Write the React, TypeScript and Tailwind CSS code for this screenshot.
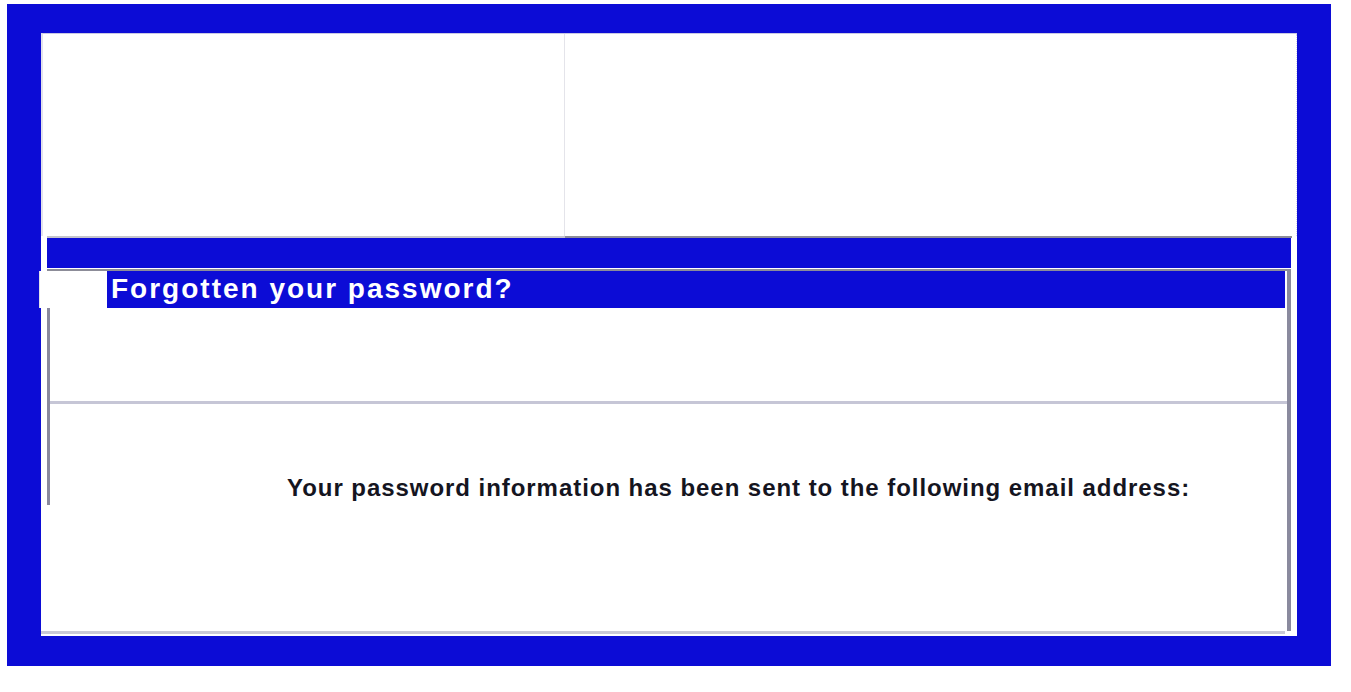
import React from "react";

export default function App() {
  return (
    <div className="w-[1351px] h-[692px] bg-white pt-[4px] pl-[7px]" style={{ fontFamily: '"Liberation Sans", Arial, sans-serif' }}>
      <div className="w-[1324px] h-[662px] bg-[#0c0cd6] pt-[29px] pl-[34px]">
        <div className="w-[1256px] h-[603px] bg-white flex flex-col">
          {/* top area */}
          <div className="h-[203px] flex border-t border-[#c8c8e4] border-l-2 border-l-[#e2e2ec]">
            <div className="w-[522px] border-r border-[#e4e4ea]" />
            <div className="flex-1 border-r border-dotted border-[#d8d8e8]" />
          </div>
          <div className="h-[2px] flex">
            <div className="w-[6px]" />
            <div className="w-[518px] bg-[#c4c4cc]" />
            <div className="flex-1 bg-[#8c8c98] mr-[5px]" />
          </div>
          <div className="h-[30px] bg-[#0c0cd6] mx-[6px]" />
          <div className="h-[1px]" />
          {/* main section */}
          <div className="h-[362px] mr-[6px] flex flex-col border-r-4 border-[#8a8a9e]">
            <div className="h-[2px] bg-[#8c8c98] ml-[6px]" />
            <div className="h-[37px] flex">
              <div className="w-[68px] bg-white border-l border-[#e0e0e8] -ml-[2px]" />
              <div className="flex-1 bg-[#0c0cd6] mr-[2px] flex items-center pl-[4px] pb-[2px]">
                <span className="text-white font-bold text-[28px] leading-none tracking-[2px]">Forgotten your password?</span>
              </div>
            </div>
            <div className="ml-[6px] h-[197px] border-l-[3px] border-[#8a8a9e] flex flex-col">
              <div className="h-[93px]" />
              <div className="h-[3px] bg-[#c6c6d6]" />
              <div className="flex-1 pl-[237px] pt-[72px]">
                <span className="text-[#15151f] font-bold text-[24px] leading-none tracking-[0.95px]">Your password information has been sent to the following email address:</span>
              </div>
            </div>
            <div className="flex-1" />
          </div>
          <div className="h-[3px] bg-[#cacad6] mr-[12px]" />
          <div className="h-[2px]" />
        </div>
      </div>
    </div>
  );
}
